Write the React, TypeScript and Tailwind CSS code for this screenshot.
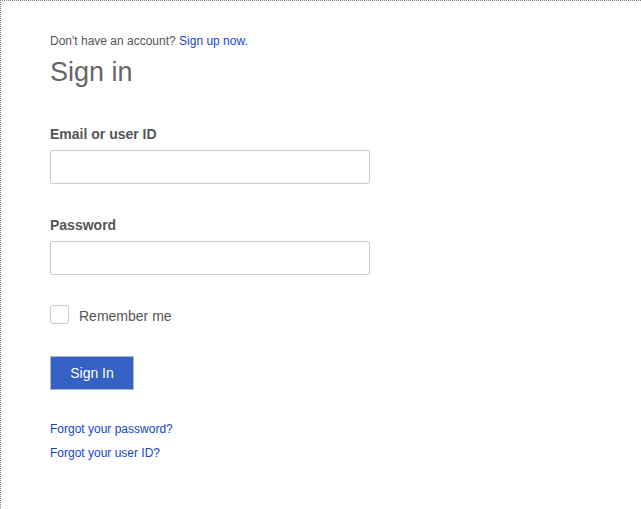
import React from "react";

export default function App(): React.JSX.Element {
  return (
    <div className="w-[641px] h-[509px] bg-white border-t border-l border-dotted border-[#808080] font-['Liberation_Sans',Arial,sans-serif] overflow-hidden">
      <div className="pl-[49px] pt-[32px] flex flex-col items-start">
        {/* Sign up prompt */}
        <p className="text-[12px] leading-[16px] text-[#555]">
          Don't have an account?{" "}
          <a href="#" className="text-[#1446d0]">
            Sign up now.
          </a>
        </p>

        <h1 className="mt-[7px] text-[27px] leading-[32px] font-light text-[#666]">Sign in</h1>

        {/* Email */}
        <label className="mt-[36px] text-[14px] leading-[20px] font-bold text-[#555]">Email or user ID</label>
        <input
          type="text"
          className="mt-[6px] w-[320px] h-[34px] border border-[#ccc] rounded-[2px] px-2 text-[14px] outline-none"
        />

        {/* Password */}
        <label className="mt-[31px] text-[14px] leading-[20px] font-bold text-[#555]">Password</label>
        <input
          type="password"
          className="mt-[6px] w-[320px] h-[34px] border border-[#ccc] rounded-[2px] px-2 text-[14px] outline-none"
        />

        {/* Remember me */}
        <div className="mt-[30px] flex items-start gap-[10px]">
          <span className="w-[19px] h-[19px] border border-[#ccc] rounded-[3px] bg-white" />
          <span className="mt-[1px] text-[14px] leading-[20px] text-[#555]">Remember me</span>
        </div>

        <button className="mt-[30px] w-[84px] h-[34px] bg-[#3560c4] border border-[#a8b5cf] text-white text-[14px]">
          Sign In
        </button>

        {/* Help links */}
        <a href="#" className="mt-[31px] text-[12px] leading-[16px] text-[#1446d0]">
          Forgot your password?
        </a>
        <a href="#" className="mt-[8px] text-[12px] leading-[16px] text-[#1446d0]">
          Forgot your user ID?
        </a>
      </div>
    </div>
  );
}
